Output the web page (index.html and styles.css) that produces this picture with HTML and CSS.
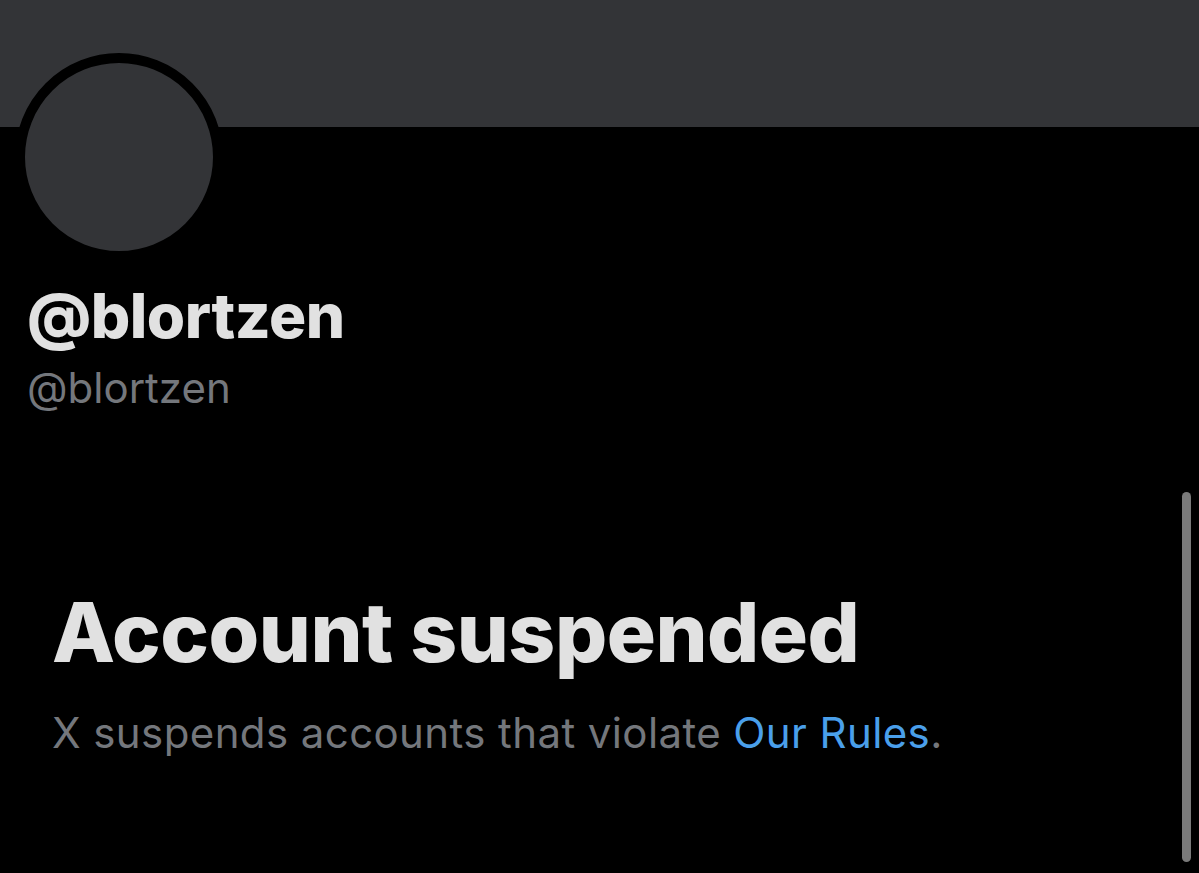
FILE: index.html
```html
<!DOCTYPE html>
<html lang="en">

<head>
    <meta charset="UTF-8">
    <meta name="viewport" content="width=device-width, initial-scale=1.0">
    <title>@blortzen</title>
    <link rel="stylesheet" href="styles.css">
</head>

<body>
    <div class="banner"></div>

    <section class="profile">
        <div class="avatar"></div>
        <h1 class="display-name">@blortzen</h1>
        <p class="handle">@blortzen</p>
    </section>

    <section class="suspended">
        <h2>Account suspended</h2>
        <p>X suspends accounts that violate <a href="#">Our Rules</a>.</p>
    </section>

    <div class="scrollbar"></div>
</body>

</html>
```

FILE: styles.css
```css
*, *::before, *::after {
    box-sizing: border-box;
}

:root {
    --bg-color: #000000;
    --banner-bg: #333437;
    --text-color: #e1e1e1;
    --muted-color: #74777c;
    --link-color: #4a9fea;
}

body {
    margin: 0;
    padding: 0;
    height: 873px;
    overflow: hidden;
    position: relative;
    background-color: var(--bg-color);
    color: var(--text-color);
    font-family: 'Inter', 'Liberation Sans', sans-serif;
}

.banner {
    height: 127px;
    background: var(--banner-bg);
}

.profile {
    padding: 0 0 0 27px;
}

.avatar {
    width: 208px;
    height: 208px;
    margin: -74px 0 0 -12px;
    border: 10px solid var(--bg-color);
    border-radius: 50%;
    background: var(--banner-bg);
}

.display-name {
    margin: 23px 0 0;
    font-size: 62px;
    line-height: 64px;
    font-weight: 800;
    letter-spacing: -0.5px;
}

.handle {
    margin: 10px 0 0;
    font-size: 42px;
    line-height: 60px;
    color: var(--muted-color);
}

.suspended {
    padding: 0 0 0 52px;
    margin-top: 170px;
}

.suspended h2 {
    margin: 0;
    font-size: 82px;
    line-height: 90px;
    font-weight: 800;
    letter-spacing: -0.5px;
}

.suspended p {
    margin: 27px 0 0;
    font-size: 42px;
    line-height: 56px;
    letter-spacing: 0.4px;
    color: var(--muted-color);
}

.suspended a {
    color: var(--link-color);
    text-decoration: none;
}

/* thin overlay scroll indicator on the right edge */
.scrollbar {
    position: absolute;
    top: 492px;
    left: 1182px;
    width: 9px;
    height: 370px;
    border-radius: 5px;
    background: #7a7a7a;
}
```
